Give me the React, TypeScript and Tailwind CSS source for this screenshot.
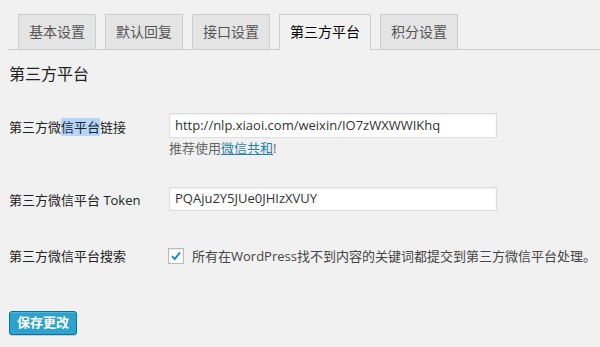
const font = { fontFamily: '"Open Sans", "Noto Sans CJK SC", sans-serif' };

const tabs = ['基本设置', '默认回复', '接口设置', '第三方平台', '积分设置'];

const Tabs = ({ active }: { active: number }) => {
  return (
    <div className="ml-2 flex items-end gap-[9px] border-b border-[#cccccc] pl-[10px] pt-[14px]">
      {tabs.map((t, i) =>
        i === active ? (
          <div
            key={t}
            className="-mb-px flex h-[36px] items-start border border-b-0 border-[#cccccc] bg-[#f1f1f1] px-[10px] pt-[5px] text-[14px] leading-[24px] text-[#000000]"
          >
            {t}
          </div>
        ) : (
          <div
            key={t}
            className="flex h-[35px] items-start border border-b-0 border-[#cccccc] bg-[#e4e4e4] px-[10px] pt-[5px] text-[14px] leading-[24px] text-[#555555]"
          >
            {t}
          </div>
        )
      )}
    </div>
  );
};

const App = () => {
  return (
    <div className="h-[347px] w-[600px] overflow-hidden bg-[#f1f1f1]" style={font}>
      <Tabs active={3} />

      <div className="pl-[9px]">
        {/* section title */}
        <h2 className="mt-[14px] text-[16px] leading-[20px] text-[#222222]">第三方平台</h2>

        {/* row: link */}
        <div className="mt-[29px] flex items-start">
          <div className="w-[160px] pt-[2px] text-[13px] leading-[25px] text-[#222222]">
            第三方微<span className="bg-[#b4d5fe]">信平台</span>链接
          </div>
          <div>
            <div className="flex h-[25px] w-[328px] items-center border border-[#dddddd] bg-white pl-[5px] text-[13px] text-[#333333] shadow-[inset_0_1px_2px_rgba(0,0,0,0.07)]">
              http://nlp.xiaoi.com/weixin/IO7zWXWWIKhq
            </div>
            <div className="mt-px text-[13px] leading-[18px] text-[#666666]">
              推荐使用<span className="text-[#2a7fa8] underline">微信共和</span>!
            </div>
          </div>
        </div>

        {/* row: token */}
        <div className="mt-[30px] flex items-start">
          <div className="w-[160px] pt-[1px] text-[13px] leading-[24px] text-[#222222]">
            第三方微信平台 Token
          </div>
          <div className="flex h-[24px] w-[328px] items-center border border-[#dddddd] bg-white pl-[5px] text-[13px] text-[#333333] shadow-[inset_0_1px_2px_rgba(0,0,0,0.07)]">
            PQAju2Y5JUe0JHIzXVUY
          </div>
        </div>

        {/* row: search */}
        <div className="mt-[32px] flex h-[24px] items-center">
          <div className="w-[159px] text-[13px] leading-[24px] text-[#222222]">第三方微信平台搜索</div>
          <div className="flex items-center gap-[8px]">
            <span className="flex h-[16px] w-[16px] items-center justify-center border border-[#bbbbbb] bg-white shadow-[inset_0_1px_2px_rgba(0,0,0,0.1)]">
              <svg width="12" height="12" viewBox="0 0 12 12">
                <path d="M2 6.2 L4.8 9 L10 2.4" fill="none" stroke="#1e8cbe" strokeWidth="2" />
              </svg>
            </span>
            <span className="text-[13px] leading-[24px] text-[#444444]">
              所有在WordPress找不到内容的关键词都提交到第三方微信平台处理。
            </span>
          </div>
        </div>

        <button className="mt-[43px] flex h-[24px] w-[68px] items-center justify-center rounded-[3px] border border-[#0074a2] bg-[#2ea2cc] text-[13px] font-bold text-white shadow-[inset_0_1px_0_rgba(120,200,230,0.5),0_1px_0_rgba(0,0,0,0.15)]">
          保存更改
        </button>
      </div>
    </div>
  );
};

export default App;
